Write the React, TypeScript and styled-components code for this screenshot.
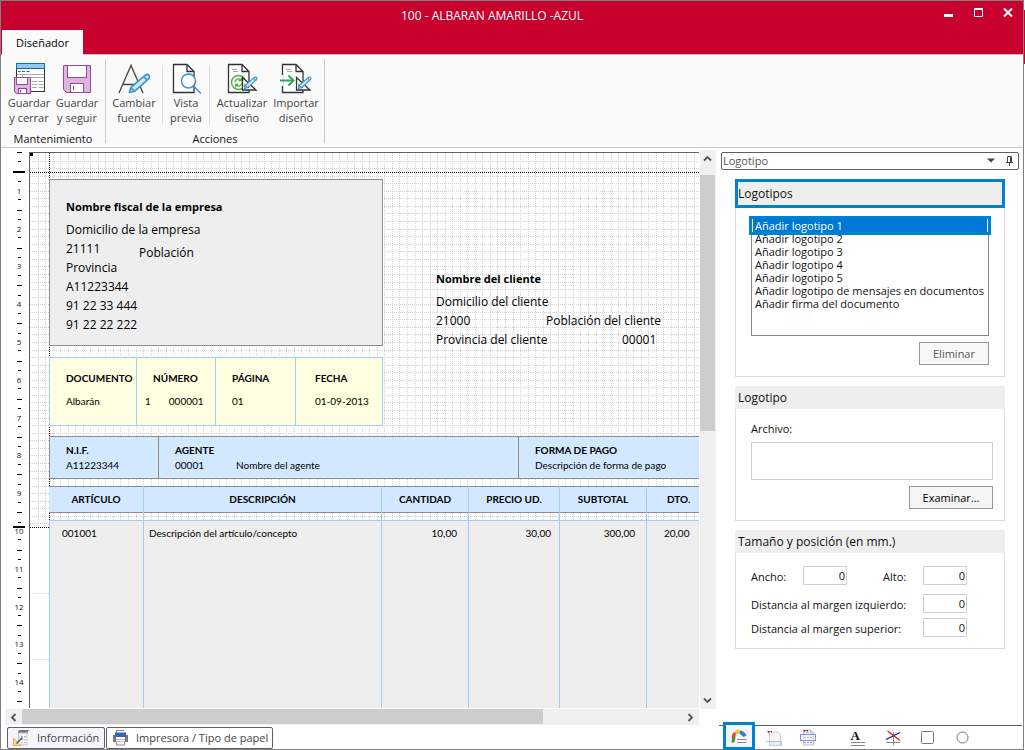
import React, { useEffect, useRef, useState } from 'react';
import styled, { createGlobalStyle, css } from 'styled-components';

const GlobalStyle = createGlobalStyle`
  *, *::before, *::after { box-sizing: border-box; }
  body {
    margin: 0;
    background: #fff;
    color: #111;
    font: 11px/15px "Open Sans", "Noto Sans", sans-serif;
  }
  button, input { font: inherit; color: inherit; }
  h1, h2, p, dl, dd, dt, ul { margin: 0; padding: 0; }
`;

const red = '#c8002d';
const frame = '#808080';
const accent = '#0083cc';
const lightLine = '#a3cdf5';

/* ---------- window ---------- */

const Desktop = styled.div`
  height: 100vh;
  min-height: 700px;
  padding-right: 1px;
  background: linear-gradient(#fff 10px, ${red} 10px, ${red} 64px, #fff 64px);
`;

const Window = styled.div`
  height: 100%;
  display: flex;
  flex-direction: column;
  border: 1px solid ${frame};
  background: #fff;
`;

const TopBar = styled.header`
  background: ${red};
  color: #fff;
`;

const TitleRow = styled.div`
  height: 29px;
  display: grid;
  grid-template-columns: 1fr auto;
  padding-right: 10px;
`;

const Title = styled.h1`
  padding-left: 40px;
  text-align: center;
  font-size: 12px;
  font-weight: 400;
  line-height: 30px;
`;

const WindowControls = styled.div`
  display: flex;
  gap: 20px;
  padding-top: 6px;
`;

const ControlButton = styled.button`
  width: 10px;
  height: 12px;
  padding: 0;
  border: 0;
  background: none;
  svg { display: block; }
`;

const TabRow = styled.div`
  height: 24px;
  padding-left: 1px;
`;

const RibbonTab = styled.button`
  position: relative;
  display: block;
  width: 81px;
  height: 25px;
  padding: 0;
  border: 0;
  background: #fafafa;
  color: #000;
`;

/* ---------- ribbon ---------- */

const Ribbon = styled.nav`
  display: flex;
  height: 94px;
  flex: none;
  border-top: 1px solid #c8c0c4;
  border-bottom: 1px solid #c8c8c8;
  background: #fafafa;
`;

const RibbonGroup = styled.section<{ $width: number }>`
  width: ${p => p.$width}px;
  display: flex;
  flex-direction: column;
  justify-content: space-between;
  padding: 7px 0 1px;
`;

const RibbonButtons = styled.div<{ $indent?: number }>`
  display: flex;
  padding-left: ${p => p.$indent ?? 0}px;
`;

const RibbonCaption = styled.h2`
  font-size: 11px;
  font-weight: 400;
  text-align: center;
`;

const RibbonButton = styled.button<{ $width: number }>`
  width: ${p => p.$width}px;
  display: flex;
  flex-direction: column;
  align-items: center;
  gap: 1px;
  padding: 0;
  border: 0;
  background: none;
  color: #444;
  text-align: center;
  line-height: 15px;
  white-space: pre;
  svg { display: block; flex: none; }
`;

const GroupDivider = styled.div`
  width: 1px;
  margin: 4px 0;
  background: #c8c8c8;
`;

const ButtonDivider = styled.div`
  width: 1px;
  margin: 3px 0 0;
  background: #dedede;
`;

/* ---------- work area ---------- */

const Workspace = styled.div`
  flex: 1;
  min-height: 0;
  display: grid;
  grid-template-columns: minmax(0, 1fr) 307px;
`;

const Designer = styled.main`
  display: flex;
  flex-direction: column;
  min-height: 0;
  padding-top: 2px;
`;

const CanvasRow = styled.div`
  flex: 1;
  min-height: 0;
  display: grid;
  grid-template-columns: 28px minmax(0, 1fr) 15px;
  border-right: 1px solid #f0f0f0;
`;

const RulerBox = styled.div`
  padding-top: 2px;
  overflow: hidden;
  svg { display: block; }
  text { font-size: 8px; text-anchor: middle; fill: #111; }
`;

const Paper = styled.div`
  position: relative;
  overflow: hidden;
  display: flex;
  flex-direction: column;
  margin: 2px 1px 1px 0;
  padding: 26px 0 0 19px;
  border-top: 1px solid #606060;
  border-left: 1px solid #606060;
  background: #fff;
  color: #000;
`;

const PaperGuides = styled.svg`
  position: absolute;
  top: 0;
  left: 0;
`;

const Blocks = styled.div`
  position: relative;
  flex: 1;
  min-height: 0;
  display: flex;
  flex-direction: column;
`;

const Parties = styled.div`
  display: flex;
  align-items: flex-start;
  gap: 53px;
  height: 167px;
  flex: none;
`;

const Party = styled.section`
  font-size: 12px;
  line-height: 19px;
  white-space: nowrap;
`;

const Company = styled(Party)`
  width: 334px;
  height: 167px;
  padding: 17px 16px;
  border: 1px solid #8c8c8c;
  background: #eee;
`;

const Client = styled(Party)`
  width: 240px;
  flex: none;
  padding-top: 90px;
`;

const PartyName = styled.p`
  margin-bottom: 4px;
  font-size: 11px;
  font-weight: 700;
`;

const PartyRow = styled.p<{ $columns: string }>`
  display: grid;
  grid-template-columns: ${p => p.$columns};
`;

const Lowered = styled.span`
  padding-top: 4px;
  height: 19px;
`;

const dataText = css`
  font-family: Lato, "Open Sans", sans-serif;
  font-size: 10px;
  line-height: 15px;
  white-space: nowrap;
`;

const DocumentData = styled.dl`
  ${dataText}
  display: grid;
  grid-template-columns: 87px 79px 80px 88px;
  width: 334px;
  height: 69px;
  flex: none;
  margin-top: 11px;
  border: solid ${lightLine};
  border-width: 1px 1px 1px 0;
  background: #ffffe1;
`;

const DocumentCell = styled.div<{ $pad?: number }>`
  display: flex;
  flex-direction: column;
  gap: 8px;
  padding: 13px 0 0 ${p => p.$pad ?? 16}px;
  border-left: 1px solid ${lightLine};
  dt { font-weight: 700; }
`;

const SeriesNumber = styled.dd`
  display: flex;
  gap: 18px;
  margin-left: -8px;
`;

const AgentBand = styled.dl`
  ${dataText}
  display: grid;
  grid-template-columns: 109px 360px 1fr;
  height: 43px;
  flex: none;
  margin-top: 10px;
  border: solid #8c8c8c;
  border-width: 1px 0;
  background: #d2e8ff;
`;

const AgentCell = styled.div`
  padding: 6px 0 0 16px;
  border-left: 1px solid #8c8c8c;
  dt { font-weight: 700; }
`;

const AgentValue = styled.dd`
  display: flex;
  gap: 32px;
`;

const LinesWrap = styled.div`
  flex: 1;
  min-height: 0;
  margin-top: 7px;
`;

const LinesTable = styled.table`
  ${dataText}
  width: 100%;
  height: 100%;
  table-layout: fixed;
  border-spacing: 0;
  th, td { padding: 0; }
`;

const HeadCell = styled.th<{ $width?: number; $last?: boolean }>`
  width: ${p => (p.$width ? `${p.$width}px` : 'auto')};
  height: 34px;
  vertical-align: top;
  text-align: ${p => (p.$last ? 'left' : 'center')};
  border-right: ${p => (p.$last ? '0' : `1px solid ${lightLine}`)};
`;

const HeadLabel = styled.div<{ $last?: boolean }>`
  height: 27px;
  padding-left: ${p => (p.$last ? '20px' : '0')};
  border: solid #8c8c8c;
  border-width: 1px 0;
  background: #d2e8ff;
  line-height: 25px;
`;

const BodyCell = styled.td<{ $align?: 'right'; $pad: number; $last?: boolean; $first?: boolean }>`
  && {
    padding: 5px ${p => p.$pad}px;
  }
  vertical-align: top;
  text-align: ${p => p.$align ?? 'left'};
  border-top: 1px solid ${lightLine};
  border-left: ${p => (p.$first ? `1px solid ${lightLine}` : '0')};
  border-right: ${p => (p.$last ? '0' : `1px solid ${lightLine}`)};
  background: #eee;
`;

/* ---------- scroll bars ---------- */

const VScroll = styled.div`
  display: grid;
  grid-template-rows: 25px 1fr 17px;
  background: #f0f0f0;
`;

const VThumb = styled.div`
  height: calc(50% - 3px);
  background: #cdcdcd;
`;

const HScroll = styled.div`
  display: grid;
  grid-template-columns: 17px 1fr 17px;
  height: 16px;
  flex: none;
  margin: 0 17px 0 4px;
  background: #f0f0f0;
`;

const HThumb = styled.div`
  width: 79%;
  height: 15px;
  background: #cdcdcd;
`;

const ScrollButton = styled.button`
  display: flex;
  align-items: flex-start;
  justify-content: center;
  padding: 4px 0 0;
  border: 0;
  background: none;
`;

/* ---------- bottom tabs ---------- */

const BottomTabs = styled.div`
  display: flex;
  gap: 1px;
  height: 24px;
  flex: none;
  padding: 2px 0 0 6px;
`;

const BottomTab = styled.button<{ $width: number; $active?: boolean }>`
  width: ${p => p.$width}px;
  height: 22px;
  display: flex;
  align-items: center;
  gap: 7px;
  padding: 0 0 1px 5px;
  border: 1px solid #606060;
  border-radius: 2px;
  background: ${p => (p.$active ? '#f5f5fb' : '#fff')};
  color: #444;
  white-space: nowrap;
`;

/* ---------- property panel ---------- */

const Panel = styled.aside`
  display: flex;
  flex-direction: column;
  min-height: 0;
`;

const PanelCaption = styled.header`
  display: flex;
  align-items: center;
  gap: 10px;
  height: 18px;
  flex: none;
  margin: 4px 4px 0 5px;
  padding: 0 4px 1px 1px;
  border: 1px solid #606060;
  border-radius: 2px;
  color: #555;
`;

const PanelTitle = styled.span`
  flex: 1;
`;

const CaptionButton = styled.button`
  padding: 0;
  border: 0;
  background: none;
  svg { display: block; }
`;

const Groups = styled.div`
  flex: 1;
  min-height: 0;
  overflow: hidden;
  display: flex;
  flex-direction: column;
  gap: 9px;
  padding: 9px 18px 0 19px;
`;

const Group = styled.section``;

const GroupTitle = styled.h2<{ $active?: boolean }>`
  padding-left: ${p => (p.$active ? 0 : 3)}px;
  border: ${p => (p.$active ? `3px solid ${accent}` : '0')};
  background: #eee;
  font-size: 12px;
  font-weight: 400;
  line-height: 23px;
`;

const GroupBody = styled.div<{ $right?: number }>`
  display: flex;
  flex-direction: column;
  padding: 10px ${p => p.$right ?? 15}px 11px 15px;
  border: 1px solid #dcdcdc;
  border-top: 0;
`;

const LogoList = styled.ul`
  height: 118px;
  margin-bottom: 6px;
  border: 1px solid #828790;
  list-style: none;
`;

const LogoItem = styled.li<{ $selected?: boolean }>`
  height: 13px;
  padding-left: ${p => (p.$selected ? 2 : 3)}px;
  line-height: 14px;
  white-space: nowrap;
  ${p =>
    p.$selected &&
    css`
      position: relative;
      border: solid #fff;
      border-width: 0 1px;
      background: #0078d7;
      box-shadow: 0 0 0 3px ${accent};
      color: #fff;
    `}
`;

const PushButton = styled.button<{ $width: number }>`
  align-self: flex-end;
  width: ${p => p.$width}px;
  height: 23px;
  padding: 0;
  border: 1px solid #999;
  background: #f5f5f5;
  color: #000;
  &:disabled { color: #555; background: #f8f8f8; }
`;

const FileLabel = styled.label`
  margin: 2px 0 6px;
`;

const FileInput = styled.input`
  width: 100%;
  height: 38px;
  margin-bottom: 6px;
  padding: 2px 4px;
  border: 1px solid #d0d0d0;
  background: #fff;
`;

const Fields = styled.div`
  display: flex;
  flex-direction: column;
  gap: 5px;
  width: 216px;
  padding-top: 3px;
`;

const FieldPair = styled.div`
  display: flex;
  justify-content: space-between;
  margin-bottom: 4px;
`;

const Field = styled.label<{ $label?: number }>`
  display: grid;
  grid-template-columns: ${p => (p.$label ? `${p.$label}px` : '1fr')} 44px;
  white-space: nowrap;
  line-height: 22px;
  height: 19px;
`;

const NumberInput = styled.input`
  width: 100%;
  height: 19px;
  padding: 0 1px;
  border: 1px solid #d0d0d0;
  background: #fff;
  text-align: right;
`;

const PanelTools = styled.div`
  display: flex;
  height: 24px;
  flex: none;
  margin: 0 1px 0 3px;
  padding-left: 3px;
  border-top: 1px solid #606060;
`;

const ToolButton = styled.button<{ $active?: boolean; $spaced?: boolean }>`
  display: flex;
  align-items: center;
  justify-content: center;
  width: 35px;
  height: 23px;
  margin-left: ${p => (p.$spaced ? 14 : 0)}px;
  padding: 0;
  border: 0;
  background: none;
  ${p =>
    p.$active &&
    css`
      position: relative;
      width: 32px;
      height: 28px;
      margin: -4px 1px 0;
      border: 3px solid ${accent};
      background: #f5f5fb;
    `}
`;

/* A letter over two ruled lines */
const TextTool = styled.span`
  width: 14px;
  height: 16px;
  border-bottom: 1px solid #888;
  background: linear-gradient(#888, #888) 0 12px / 14px 1px no-repeat;
  font: 700 13px/12px "Liberation Serif", serif;
  text-align: left;
`;

/* ---------- drawings ---------- */

const Pencil = () => (
  <g stroke="#3c96d6" strokeWidth="1.4" fill="#d4e9f8" strokeLinejoin="round">
    <path d="M0 0l1.2-4.2L12.6-14.2q2-1.2 3 .2 1 1.600-.4 2.800L4-1z" />
    <path d="M1.300-3.800L4-1M11.300-13.200l2.800 3" fill="none" />
  </g>
);

const SaveCloseIcon = () => (
  <svg width="32" height="32">
    <rect x="3.500" y="1.500" width="28" height="28" fill="#fff" stroke="#333" />
    <rect x="3.500" y="1.500" width="28" height="5" fill="#92c8f0" stroke="#0b6fb3" />
    <path d="M5 9.500h2.500m1.500 0h3m1.500 0h3" stroke="#555" />
    <path d="M4 12.500h27M18 15.500h13M9.500 12.500v3" stroke="#aaa" />
    <path d="M19 19.500h12M19 22.500h12M19 25.500h12" stroke="#aaa" strokeDasharray="5 1.500" />
    <path d="M1.500 15.500h16v16H3.500l-2-2z" fill="#dcb6dc" stroke="#9b479f" />
    <rect x="3.500" y="15.500" width="11" height="7" fill="#fff" stroke="#9b479f" />
    <rect x="5.500" y="26.500" width="8" height="5" fill="#fff" stroke="#9b479f" />
    <path d="M7.500 28v2.500" stroke="#555" />
  </svg>
);

const SaveIcon = () => (
  <svg width="32" height="32">
    <path d="M2.500 3.500h27v27H5.500l-3-3z" fill="#dcb6dc" stroke="#9b479f" />
    <rect x="6.500" y="3.500" width="19" height="12" fill="#fff" stroke="#9b479f" />
    <rect x="9.500" y="21.500" width="13" height="9" fill="#fff" stroke="#9b479f" />
    <path d="M12.500 24v4" stroke="#555" />
  </svg>
);

const FontIcon = () => (
  <svg width="32" height="32">
    <path d="M1 31L13 3.500L25 31M5.500 22.500h16" fill="none" stroke="#444" strokeWidth="1.300" />
    <g transform="translate(11.500 30.500) scale(1.250 1.220)"><Pencil /></g>
  </svg>
);

const PageShape = () => (
  <path d="M2.500 2.500H16l7 7v21H2.500zM16 2.500v7h7" fill="#fff" stroke="#333" strokeWidth="1.300" />
);

const PreviewIcon = () => (
  <svg width="32" height="32">
    <g transform="translate(1 0)"><PageShape /></g>
    <circle cx="18.500" cy="19" r="7" fill="#fff" stroke="#3c8fd0" strokeWidth="1.500" />
    <path d="M23.500 24l7.500 7.500" stroke="#3c8fd0" strokeWidth="1.500" />
  </svg>
);

const SetSquare = () => (
  <g>
    <path d="M16.500 15.500v12.500H30z" fill="#fff" stroke="#333" strokeWidth="1.300" />
    <path d="M19 22v3.500h4" fill="none" stroke="#333" />
    <g transform="translate(18.500 26.500) scale(.78)"><Pencil /></g>
  </g>
);

const RefreshDesignIcon = () => (
  <svg width="32" height="32">
    <PageShape />
    <path d="M6 7.500h5M7 9.500h5" stroke="#aaa" />
    <circle cx="12.500" cy="20.500" r="7" fill="#fff" stroke="#52b043" strokeWidth="1.500" />
    <path
      d="M9 20.500a3.500 3.500 0 0 1 6-2.500M16 20.500a3.500 3.500 0 0 1-6 2.500M15.500 15.500v3h-3M9.500 25.500v-3h3"
      fill="none"
      stroke="#52b043"
      strokeWidth="1.300"
    />
    <SetSquare />
  </svg>
);

const ImportDesignIcon = () => (
  <svg width="32" height="32">
    <PageShape />
    <path d="M6 7.500h5M7 9.500h5" stroke="#aaa" />
    <path d="M0 13h3v11H0z" fill="#fafafa" />
    <path d="M0 18.500h13M8.500 13.500l5 5-5 5" fill="none" stroke="#35a35f" strokeWidth="2" />
    <SetSquare />
  </svg>
);

const Chevron = ({ turn }: { turn: number }) => (
  <svg width="9" height="9" viewBox="0 0 9 9">
    <path d="M1 6.500l3.500-3.500L8 6.500" fill="none" stroke="#555" strokeWidth="1.800" transform={`rotate(${turn} 4.500 4.500)`} />
  </svg>
);

const InfoIcon = () => (
  <svg width="17" height="17">
    <path d="M5 3.500Q5 .5 7.500 1H16.500q-2 1-2 3v1H5z" fill="#777" />
    <path d="M5.500 4H14v12H5.500z" fill="#f3f3f3" stroke="#ccc" />
    <path d="M8 7.500h5M8 10.500h5M8 13.500h5" stroke="#bbb" strokeDasharray="2 1" />
    <path d="M.5 9v7.500H8z" fill="#f7dc94" stroke="#e3b04e" />
    <path d="M3.500 14.500l6-6" stroke="#2d6a9c" strokeWidth="1.600" />
  </svg>
);

const PrinterIcon = () => (
  <svg width="17" height="17">
    <path d="M4.500 5V1.500h7.500M4.500 11v5h8v-5" fill="#fff" stroke="#888" />
    <path d="M1 6h3v4h9V6h3v7H1z" fill="#777" />
    <rect x="3" y="3.500" width="11" height="4.500" fill="#3162cf" />
    <rect x="4" y="10.500" width="9" height="2" fill="#fff" />
  </svg>
);

const rulerUnit = 37.8;
const rulerOrigin = 1;

/* Vertical ruler: as many centimetres as fit in the height that it is given */
const Ruler = () => {
  const box = useRef<HTMLDivElement>(null);
  const [height, setHeight] = useState(556);
  useEffect(() => {
    const node = box.current;
    if (!node) return;
    const observer = new ResizeObserver(() => setHeight(node.clientHeight - 2));
    observer.observe(node);
    return () => observer.disconnect();
  }, []);
  const at = (n: number) => Math.round(rulerOrigin + rulerUnit * n);
  const marks = Array.from({ length: Math.floor((height - 6) / rulerUnit) + 1 }, (_, i) => i);
  return (
    <RulerBox ref={box}>
      <svg width="28" height={height} shapeRendering="crispEdges">
        {marks.map(n => (
          <g key={n}>
            {n === 0 ? (
              <rect x="16" y={at(0) - 1} width="5" height="1" />
            ) : (
              <text x="18" y={at(n) + 3}>{n}</text>
            )}
            <rect x="17" y={at(n + 0.25) - 1} width="3" height="1" />
            <rect x="16" y={at(n + 0.5)} width="5" height="1" />
            <rect x="17" y={at(n + 0.75)} width="3" height="1" />
          </g>
        ))}
        <rect x="12" y="19" width="12" height="2" />
        <rect x="12" y="374" width="12" height="2" />
      </svg>
    </RulerBox>
  );
};

const gridHeight = 374;

const Guides = () => {
  const steps = Array.from({ length: 400 }, (_, i) => i + 1);
  const columns = steps.map(k => `M${Math.floor(0.5 + 7.54 * k) + 0.5} 0V${gridHeight}`);
  const rows = steps
    .map(k => Math.floor(0.5 + 7.56 * k))
    .filter(y => y < gridHeight)
    .map(y => `M0 ${y + 0.5}H3000`);
  const sections = Array.from({ length: 30 }, (_, i) => `M0 ${440.5 + 66 * i}H19`);
  return (
    <PaperGuides width="3000" height="2400" fill="none" shapeRendering="crispEdges" aria-hidden="true">
      <path d={columns.join('') + rows.join('') + sections.join('')} stroke="#d4d4d4" strokeDasharray="1 1" />
      <path d={`M19.500 0V${gridHeight}M0 19.500H3000M0 374.500H19`} stroke="#000" strokeDasharray="1 1" />
      <rect width="3" height="3" fill="#000" />
    </PaperGuides>
  );
};

const LogoToolIcon = () => (
  <svg width="18" height="16">
    <path d="M1.500 14q1 1.500 3 0l1-4.500H2z" fill="#2e9f3c" />
    <path d="M2 10q-.5-4 2-6l2 1.500-1 4.500z" fill="#e0442c" />
    <path d="M4.500 4Q6.500.5 9.500 2L10 5.500l-3.500.5z" fill="#f3c92d" />
    <path d="M10 2.500q4 0 6.500 5L13.500 9 9.500 5.500z" fill="#3b7bd0" />
    <path d="M7 11.500h9.500M7 14.500h9.500" stroke="#888" />
  </svg>
);

const PageToolIcon = () => (
  <svg width="16" height="16">
    <path d="M3.500 2h8l3 3v8h-11z" fill="#f4f4f4" stroke="#ccc" />
    <path d="M3.500 13v2.500h11V11" fill="#eee" stroke="#ccc" />
    <path d="M1 1h3L2.500 3.500z" fill="#c33" /><path d="M4 1h2v2z" fill="#33c" />
    <path d="M0 11.500h15.500v4" fill="none" stroke="#9cc8ee" />
  </svg>
);

const BandToolIcon = () => (
  <svg width="17" height="17">
    <path d="M3.500 1h7l3 3v12h-10z" fill="#f7f7f7" stroke="#bbb" />
    <path d="M10.500 1v3h3M6 3.500h3" fill="none" stroke="#bbb" />
    <path d="M3 1h3L4.500 3.500z" fill="#d22" /><path d="M6 1h2v2z" fill="#22d" />
    <rect x=".5" y="5.500" width="15" height="6" fill="#eef" fillOpacity=".7" stroke="#8c8cf0" />
    <path d="M4 8.500h9" stroke="#bbb" strokeDasharray="2 1" />
    <path d="M4 13.500h9" stroke="#8c8cf0" strokeDasharray="2 1" />
  </svg>
);

const LineToolIcon = () => (
  <svg width="16" height="16">
    <path d="M8.500 2v13M1 12.500h14" stroke="#888" />
    <path d="M1 9.500l14-7" stroke="#1414c8" strokeWidth="1.300" />
    <path d="M2.500 1l12.500 9.500" stroke="#dc1414" strokeWidth="1.300" />
  </svg>
);

/* ---------- content ---------- */

const logos = [
  'Añadir logotipo 1',
  'Añadir logotipo 2',
  'Añadir logotipo 3',
  'Añadir logotipo 4',
  'Añadir logotipo 5',
  'Añadir logotipo de mensajes en documentos',
  'Añadir firma del documento',
];

const lineColumns = [
  { title: 'ARTÍCULO', width: 95, value: '001001', pad: 12 },
  { title: 'DESCRIPCIÓN', width: 238, value: 'Descripción del artículo/concepto', pad: 5 },
  { title: 'CANTIDAD', width: 87, value: '10,00', pad: 11, right: true },
  { title: 'PRECIO UD.', width: 91, value: '30,00', pad: 8, right: true },
  { title: 'SUBTOTAL', width: 87, value: '300,00', pad: 11, right: true },
  { title: 'DTO.', value: '20,00', pad: 17, last: true },
];

export default function App() {
  return (
    <Desktop>
      <GlobalStyle />
      <Window>
        <TopBar>
          <TitleRow>
            <Title>100 - ALBARAN AMARILLO -AZUL</Title>
            <WindowControls>
              <ControlButton aria-label="Minimizar">
                <svg width="10" height="12"><rect x="1" y="7" width="9" height="3" fill="#fff" /></svg>
              </ControlButton>
              <ControlButton aria-label="Maximizar">
                <svg width="10" height="12"><path d="M1.500 1.500h8v8h-8zM1 2.500h9" fill="none" stroke="#fff" /></svg>
              </ControlButton>
              <ControlButton aria-label="Cerrar">
                <svg width="10" height="12"><path d="M1 1.500l8 8M9 1.500l-8 8" stroke="#fff" strokeWidth="2" /></svg>
              </ControlButton>
            </WindowControls>
          </TitleRow>
          <TabRow><RibbonTab>Diseñador</RibbonTab></TabRow>
        </TopBar>

        <Ribbon>
          <RibbonGroup $width={104}>
            <RibbonButtons $indent={4}>
              <RibbonButton $width={48}><SaveCloseIcon />{'Guardar\ny cerrar'}</RibbonButton>
              <RibbonButton $width={48}><SaveIcon />{'Guardar\ny seguir'}</RibbonButton>
            </RibbonButtons>
            <RibbonCaption>Mantenimiento</RibbonCaption>
          </RibbonGroup>
          <GroupDivider />
          <RibbonGroup $width={218}>
            <RibbonButtons>
              <RibbonButton $width={56}><FontIcon />{'Cambiar\nfuente'}</RibbonButton>
              <ButtonDivider />
              <RibbonButton $width={46}><PreviewIcon />{'Vista\nprevia'}</RibbonButton>
              <ButtonDivider />
              <RibbonButton $width={64}><RefreshDesignIcon />{'Actualizar\ndiseño'}</RibbonButton>
              <RibbonButton $width={44}><ImportDesignIcon />{'Importar\ndiseño'}</RibbonButton>
            </RibbonButtons>
            <RibbonCaption>Acciones</RibbonCaption>
          </RibbonGroup>
          <GroupDivider />
        </Ribbon>

        <Workspace>
          <Designer>
            <CanvasRow>
              <Ruler />
              <Paper>
                <Guides />
                <Blocks>
                  <Parties>
                    <Company>
                      <PartyName>Nombre fiscal de la empresa</PartyName>
                      <p>Domicilio de la empresa</p>
                      <PartyRow $columns="73px 1fr"><span>21111</span><Lowered>Población</Lowered></PartyRow>
                      <p>Provincia</p>
                      <p>A11223344</p>
                      <p>91 22 33 444</p>
                      <p>91 22 22 222</p>
                    </Company>
                    <Client>
                      <PartyName>Nombre del cliente</PartyName>
                      <p>Domicilio del cliente</p>
                      <PartyRow $columns="110px 1fr"><span>21000</span><span>Población del cliente</span></PartyRow>
                      <PartyRow $columns="186px 1fr"><span>Provincia del cliente</span><span>00001</span></PartyRow>
                    </Client>
                  </Parties>

                  <DocumentData>
                    <DocumentCell><dt>DOCUMENTO</dt><dd>Albarán</dd></DocumentCell>
                    <DocumentCell>
                      <dt>NÚMERO</dt>
                      <SeriesNumber><span>1</span><span>000001</span></SeriesNumber>
                    </DocumentCell>
                    <DocumentCell><dt>PÁGINA</dt><dd>01</dd></DocumentCell>
                    <DocumentCell $pad={19}><dt>FECHA</dt><dd>01-09-2013</dd></DocumentCell>
                  </DocumentData>

                  <AgentBand>
                    <AgentCell><dt>N.I.F.</dt><dd>A11223344</dd></AgentCell>
                    <AgentCell>
                      <dt>AGENTE</dt>
                      <AgentValue><span>00001</span><span>Nombre del agente</span></AgentValue>
                    </AgentCell>
                    <AgentCell><dt>FORMA DE PAGO</dt><dd>Descripción de forma de pago</dd></AgentCell>
                  </AgentBand>

                  <LinesWrap>
                    <LinesTable>
                      <thead>
                        <tr>
                          {lineColumns.map(c => (
                            <HeadCell key={c.title} scope="col" $width={c.width} $last={c.last}>
                              <HeadLabel $last={c.last}>{c.title}</HeadLabel>
                            </HeadCell>
                          ))}
                        </tr>
                      </thead>
                      <tbody>
                        <tr>
                          {lineColumns.map((c, i) => (
                            <BodyCell
                              key={c.title}
                              $pad={c.pad}
                              $align={c.right ? 'right' : undefined}
                              $first={i === 0}
                              $last={c.last}
                            >
                              {c.value}
                            </BodyCell>
                          ))}
                        </tr>
                      </tbody>
                    </LinesTable>
                  </LinesWrap>
                </Blocks>
              </Paper>
              <VScroll>
                <ScrollButton aria-label="Subir"><Chevron turn={0} /></ScrollButton>
                <div><VThumb /></div>
                <ScrollButton aria-label="Bajar"><Chevron turn={180} /></ScrollButton>
              </VScroll>
            </CanvasRow>
            <HScroll>
              <ScrollButton aria-label="Izquierda"><Chevron turn={-90} /></ScrollButton>
              <div><HThumb /></div>
              <ScrollButton aria-label="Derecha"><Chevron turn={90} /></ScrollButton>
            </HScroll>
            <BottomTabs>
              <BottomTab $width={98} $active><InfoIcon />Información</BottomTab>
              <BottomTab $width={167}><PrinterIcon />Impresora / Tipo de papel</BottomTab>
            </BottomTabs>
          </Designer>

          <Panel>
            <PanelCaption>
              <PanelTitle>Logotipo</PanelTitle>
              <CaptionButton aria-label="Menú">
                <svg width="8" height="5"><path d="M0 .5h8L4 4.500z" fill="#444" /></svg>
              </CaptionButton>
              <CaptionButton aria-label="Fijar">
                <svg width="9" height="10"><path d="M2.500 6V.5h4V6M5.500 1v5M1 6.500h7M4.500 6.500V10" fill="none" stroke="#444" /></svg>
              </CaptionButton>
            </PanelCaption>

            <Groups>
              <Group>
                <GroupTitle $active id="logos">Logotipos</GroupTitle>
                <GroupBody>
                  <LogoList role="listbox" aria-labelledby="logos">
                    {logos.map((name, i) => (
                      <LogoItem key={name} role="option" aria-selected={i === 0} $selected={i === 0}>
                        {name}
                      </LogoItem>
                    ))}
                  </LogoList>
                  <PushButton $width={70} disabled>Eliminar</PushButton>
                </GroupBody>
              </Group>

              <Group>
                <GroupTitle>Logotipo</GroupTitle>
                <GroupBody $right={11}>
                  <FileLabel htmlFor="archivo">Archivo:</FileLabel>
                  <FileInput id="archivo" type="text" />
                  <PushButton $width={84}>Examinar...</PushButton>
                </GroupBody>
              </Group>

              <Group>
                <GroupTitle>Tamaño y posición (en mm.)</GroupTitle>
                <GroupBody>
                  <Fields>
                    <FieldPair>
                      <Field $label={52}>Ancho:<NumberInput defaultValue="0" /></Field>
                      <Field $label={40}>Alto:<NumberInput defaultValue="0" /></Field>
                    </FieldPair>
                    <Field>Distancia al margen izquierdo:<NumberInput defaultValue="0" /></Field>
                    <Field>Distancia al margen superior:<NumberInput defaultValue="0" /></Field>
                  </Fields>
                </GroupBody>
              </Group>
            </Groups>

            <PanelTools>
              <ToolButton $active aria-label="Logotipo"><LogoToolIcon /></ToolButton>
              <ToolButton aria-label="Página"><PageToolIcon /></ToolButton>
              <ToolButton aria-label="Secciones"><BandToolIcon /></ToolButton>
              <ToolButton $spaced aria-label="Texto"><TextTool>A</TextTool></ToolButton>
              <ToolButton aria-label="Línea"><LineToolIcon /></ToolButton>
              <ToolButton aria-label="Rectángulo">
                <svg width="13" height="13"><rect x=".5" y=".5" width="12" height="12" rx="1" fill="#fff" stroke="#777" /></svg>
              </ToolButton>
              <ToolButton aria-label="Elipse">
                <svg width="13" height="13"><circle cx="6.500" cy="6.500" r="5.500" fill="#fff" stroke="#777" /></svg>
              </ToolButton>
            </PanelTools>
          </Panel>
        </Workspace>
      </Window>
    </Desktop>
  );
}
